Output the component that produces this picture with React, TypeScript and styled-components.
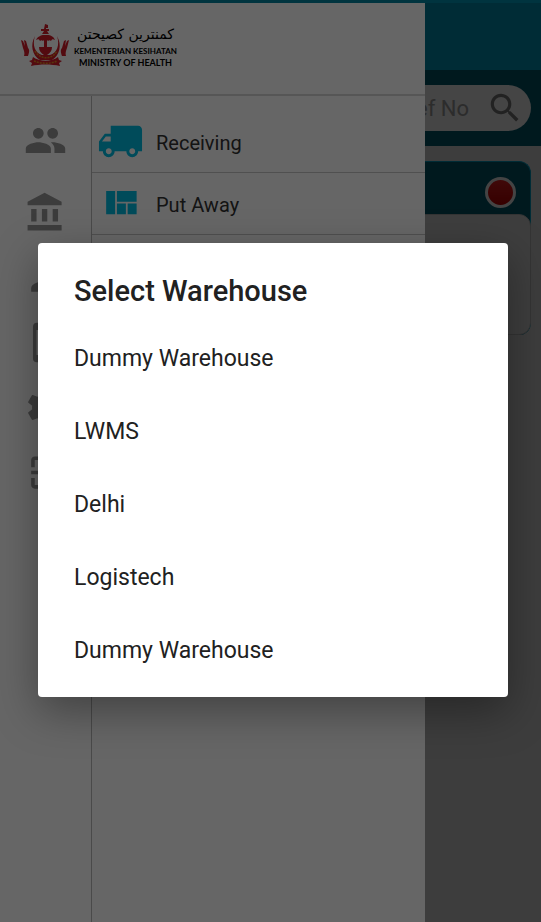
import React from "react";
import styled, { createGlobalStyle } from "styled-components";

const GlobalStyle = createGlobalStyle`
  *, *::before, *::after { box-sizing: border-box; }
  body { margin: 0; font-family: Roboto, "Liberation Sans", sans-serif; background: #989898; }
  button, input { font: inherit; color: inherit; }
  ul { list-style: none; margin: 0; padding: 0; }
`;

const Screen = styled.div`
  position: relative;
  min-height: 100vh;
  overflow: hidden;
`;

const TopBar = styled.header`
  height: 70px;
  background: #006e87;
  border-top: 3px solid #00829f;
`;

const SearchBar = styled.div`
  padding: 15px 10px;
  background: #003f4d;
`;

const SearchField = styled.form`
  display: flex;
  align-items: center;
  justify-content: flex-end;
  height: 46px;
  padding: 0 7px 0 20px;
  border-radius: 23px;
  background: #acacac;
`;

const SearchInput = styled.input`
  flex: 1;
  min-width: 0;
  padding: 0 17px 0 0;
  border: 0;
  background: transparent;
  font-size: 22px;
  text-align: right;
  &::placeholder { color: #6e6e6e; opacity: 1; }
`;

const IconButton = styled.button`
  display: flex;
  padding: 0;
  border: 0;
  background: transparent;
  color: #555;
`;

const Card = styled.article`
  margin: 15px 10px;
  border-radius: 12px;
  border: 1px solid #006e87;
  border-bottom: 0;
  background: #003f4d;
`;

const CardHead = styled.div`
  display: flex;
  align-items: center;
  justify-content: flex-end;
  height: 52px;
  padding: 8px 14px 0;
`;

const StatusDot = styled.span`
  width: 31px;
  height: 31px;
  border: 3px solid #aaa;
  border-radius: 50%;
  background: linear-gradient(#a01818, #860000);
`;

const CardBody = styled.div`
  height: 121px;
  margin: 0 -1px;
  border: 1px solid #828282;
  border-radius: 12px;
  background: #9c9c9c;
`;

const Drawer = styled.aside`
  position: absolute;
  inset: 3px auto 0 0;
  width: 78.5%;
  display: flex;
  flex-direction: column;
  background: #fff;
`;

const Brand = styled.div`
  display: flex;
  align-items: flex-start;
  height: 93px;
  padding: 21px 21px 0;
  border-bottom: 2px solid #d6d6d6;
`;

const BrandText = styled.div`
  display: flex;
  flex-direction: column;
  align-items: center;
  margin-left: 5px;
  color: #000;
  font-family: Lato, sans-serif;
  font-weight: 700;
  line-height: 12px;
  white-space: nowrap;
`;

const BrandScript = styled.span`
  font: 400 14px/21px "DejaVu Sans", sans-serif;
`;

const BrandLine = styled.span<{ $size: number }>`
  font-size: ${(p) => p.$size}px;
`;

const DrawerBody = styled.div`
  flex: 1;
  display: flex;
`;

const Rail = styled.nav`
  display: flex;
  flex-direction: column;
  align-items: center;
  width: 92px;
  padding-top: 12px;
  border-right: 1px solid #b8b8b8;
`;

const RailButton = styled.button<{ $tall?: boolean }>`
  display: flex;
  align-items: center;
  justify-content: center;
  width: 100%;
  height: ${(p) => (p.$tall ? 72 : 65)}px;
  padding: ${(p) => (p.$tall ? "0 0 8px" : "0")};
  border: 0;
  background: transparent;
  color: #979797;
`;

const Menu = styled.ul`
  flex: 1;
`;

const MenuItem = styled.li<{ $first?: boolean }>`
  padding-top: ${(p) => (p.$first ? 15 : 0)}px;
  border-bottom: 1px solid #c8c8c8;
`;

const MenuButton = styled.button`
  display: flex;
  align-items: center;
  gap: 12px;
  width: 100%;
  height: 61px;
  padding: 0 4px;
  border: 0;
  background: transparent;
  color: #333;
  font-size: 21px;
  text-align: left;
`;

const MenuLabel = styled.span`
  padding-top: 3px;
  font-size: 20px;
`;

const MenuIcon = styled.span`
  display: flex;
  justify-content: center;
  width: 48px;
  color: #00bbe2;
`;

const Backdrop = styled.div`
  position: absolute;
  inset: 0;
  display: flex;
  align-items: center;
  padding: 18px 33px 0 38px;
  background: rgba(0, 0, 0, 0.6);
`;

const Dialog = styled.section`
  flex: 1;
  padding: 24px 0 10px;
  border-radius: 4px;
  background: #fff;
  color: #212121;
  box-shadow: 0 14px 44px rgba(0, 0, 0, 0.36);
`;

const DialogTitle = styled.h2`
  margin: 0;
  padding: 0 36px 7px;
  font-size: 29px;
  font-weight: 500;
  line-height: 48px;
`;

const Option = styled.button`
  display: block;
  width: 100%;
  height: 73px;
  padding: 0 36px;
  border: 0;
  background: transparent;
  font-size: 23px;
  text-align: left;
`;

const Glyph = ({ d, size = 43, flip = false }: { d: string; size?: number; flip?: boolean }) => (
  <svg width={size} height={size} viewBox="0 0 24 24" fill="currentColor" aria-hidden="true">
    <path d={d} transform={flip ? "matrix(-1 0 0 1 24 0)" : undefined} />
  </svg>
);

const paths = {
  people: "M16 11c1.66 0 2.99-1.34 2.99-3S17.66 5 16 5s-3 1.34-3 3 1.34 3 3 3zm-8 0c1.66 0 2.99-1.34 2.99-3S9.66 5 8 5 5 6.34 5 8s1.34 3 3 3zm0 2c-2.33 0-7 1.17-7 3.5V19h14v-2.5c0-2.33-4.67-3.5-7-3.5zm8 0c-.29 0-.62.02-.97.05 1.16.84 1.97 1.97 1.97 3.45V19h6v-2.5c0-2.33-4.67-3.5-7-3.5z",
  bank: "M4 10v7h3v-7H4zm6 0v7h3v-7h-3zM2 22h19v-3H2v3zm14-12v7h3v-7h-3zm-4.5-9L2 6v2h19V6l-9.5-5z",
  person: "M12 12c2.21 0 4-1.79 4-4s-1.79-4-4-4-4 1.79-4 4 1.79 4 4 4zm0 2c-2.67 0-8 1.34-8 4v2h16v-2c0-2.66-5.33-4-8-4z",
  phone: "M17 1.01L7 1c-1.1 0-1.99.9-1.99 2v18c0 1.1.89 2 1.99 2h10c1.1 0 2-.9 2-2V3c0-1.1-.9-1.99-2-1.99zM17 19H7V5h10v14z",
  settings: "M19.43 12.98c.04-.32.07-.64.07-.98s-.03-.66-.07-.98l2.11-1.65c.19-.15.24-.42.12-.64l-2-3.46c-.12-.22-.39-.3-.61-.22l-2.49 1c-.52-.4-1.08-.73-1.69-.98l-.38-2.65C14.46 2.18 14.25 2 14 2h-4c-.25 0-.46.18-.49.42l-.38 2.65c-.61.25-1.17.59-1.69.98l-2.49-1c-.23-.09-.49 0-.61.22l-2 3.46c-.13.22-.07.49.12.64l2.11 1.65c-.04.32-.07.65-.07.98s.03.66.07.98l-2.11 1.65c-.19.15-.24.42-.12.64l2 3.46c.12.22.39.3.61.22l2.49-1c.52.4 1.08.73 1.69.98l.38 2.65c.03.24.24.42.49.42h4c.25 0 .46-.18.49-.42l.38-2.65c.61-.25 1.17-.59 1.69-.98l2.49 1c.23.09.49 0 .61-.22l2-3.46c.12-.22.07-.49-.12-.64l-2.11-1.65zM12 15.5c-1.93 0-3.5-1.57-3.5-3.5s1.57-3.5 3.5-3.5 3.5 1.57 3.5 3.5-1.57 3.5-3.5 3.5z",
  scan: "M4 9V5c0-1.1.9-2 2-2h4v2H6v4zM14 3h4c1.1 0 2 .9 2 2v4h-2V5h-4zM4 11h16v2H4zM4 15h2v4h4v2H6c-1.1 0-2-.9-2-2zM18 15h2v4c0 1.1-.9 2-2 2h-4v-2h4z",
  truck: "M20 8h-3V4H3c-1.1 0-2 .9-2 2v11h2c0 1.66 1.34 3 3 3s3-1.34 3-3h6c0 1.66 1.34 3 3 3s3-1.34 3-3h2v-5l-3-4zM6 18.5c-.83 0-1.5-.67-1.5-1.5s.67-1.5 1.5-1.5 1.5.67 1.5 1.5-.67 1.5-1.5 1.5zm13.5-9l1.96 2.5H17V9.5h2.5zm-1.5 9c-.83 0-1.5-.67-1.5-1.5s.67-1.5 1.5-1.5 1.5.67 1.5 1.5-.67 1.5-1.5 1.5z",
  quilt: "M10 18h5v-6h-5v6zm-6 0h5V5H4v13zm12 0h5v-6h-5v6zM10 5v6h11V5H10z",
  search: "M15.5 14h-.79l-.28-.27C15.41 12.59 16 11.11 16 9.5 16 5.91 13.09 3 9.5 3S3 5.91 3 9.5 5.91 16 9.5 16c1.61 0 3.09-.59 4.23-1.57l.27.28v.79l5 4.99L20.49 19l-4.99-5zm-6 0C7.01 14 5 11.99 5 9.5S7.01 5 9.5 5 14 7.01 14 9.5 11.99 14 9.5 14z",
};

const Emblem = () => (
  <svg width="48" height="44" viewBox="0 0 48 44" role="img" aria-label="Crest">
    <g fill="#d01c2a">
      <path d="M24 0l3 1v3h-2v1h3v2h-2l2 3h-7l2-3h-3V5h3z" />
      <path d="M15 16c1-3 5-5 8-5h3c4 0 7 2 8 5-2-1-3-1-4 1-1-1-2-1-3 0l-1-1v17h-3V16l-1 1c-1-1-2-1-3 0-1-2-2-2-4-1z" />
      <path d="M14 12c-5 9-3 19 5 24h12c8-5 10-15 5-24 3 9 0 17-7 19h-8c-7-2-10-10-7-19z" />
      <path d="M18 23h5v5h3v-5h5c0 4-2 6-5 8h-3c-3-2-5-4-5-8z" />
      <path d="M0 16l2 1 2 5-1-6 2 1 2 7c2 2 1 5 0 8H3c1-3 0-5-1-8z" />
      <path d="M48 16l-2 1-2 5 1-6-2 1-2 7c-2 2-1 5 0 8h4c-1-3 0-5 1-8z" />
      <path d="M12 33c7 5 18 5 25 0l1 3 3 1-3 2 1 3c-9-2-20-2-29 0l1-3-3-2 3-1z" />
    </g>
    <path d="M14 27c5 9 17 9 22 0M13 37c7 3 17 3 23 0" fill="none" stroke="#d98a1e" strokeWidth="1.5" strokeDasharray="2 1" />
  </svg>
);

const rail = [
  { label: "Users", d: paths.people },
  { label: "Warehouse", d: paths.bank },
  { label: "Profile", d: paths.person },
  { label: "Device", d: paths.phone },
  { label: "Settings", d: paths.settings },
  { label: "Scan", d: paths.scan },
];

const warehouses = ["Dummy Warehouse", "LWMS", "Delhi", "Logistech", "Dummy Warehouse"];

export default function App() {
  return (
    <Screen>
      <GlobalStyle />
      <TopBar />
      <main>
        <SearchBar>
          <SearchField>
            <SearchInput type="text" placeholder="Ref No" aria-label="Ref No" />
            <IconButton type="button" aria-label="Search">
              <Glyph d={paths.search} size={38} />
            </IconButton>
          </SearchField>
        </SearchBar>
        <Card>
          <CardHead>
            <StatusDot />
          </CardHead>
          <CardBody />
        </Card>
      </main>
      <Drawer>
        <Brand>
          <Emblem />
          <BrandText>
            <BrandScript lang="ms-Arab" dir="rtl">كمنترين كصيحتن</BrandScript>
            <BrandLine $size={8}>KEMENTERIAN KESIHATAN</BrandLine>
            <BrandLine $size={9}>MINISTRY OF HEALTH</BrandLine>
          </BrandText>
        </Brand>
        <DrawerBody>
          <Rail>
            {rail.map((item, i) => (
              <RailButton key={item.label} type="button" aria-label={item.label} $tall={i === 0}>
                <Glyph d={item.d} />
              </RailButton>
            ))}
          </Rail>
          <Menu>
            <MenuItem $first>
              <MenuButton type="button">
                <MenuIcon><Glyph d={paths.truck} size={47} flip /></MenuIcon>
                <MenuLabel>Receiving</MenuLabel>
              </MenuButton>
            </MenuItem>
            <MenuItem>
              <MenuButton type="button">
                <MenuIcon><Glyph d={paths.quilt} /></MenuIcon>
                <MenuLabel>Put Away</MenuLabel>
              </MenuButton>
            </MenuItem>
          </Menu>
        </DrawerBody>
      </Drawer>
      <Backdrop>
        <Dialog role="dialog" aria-modal="true" aria-labelledby="dialog-title">
          <DialogTitle id="dialog-title">Select Warehouse</DialogTitle>
          {warehouses.map((name, i) => (
            <Option key={i} type="button">{name}</Option>
          ))}
        </Dialog>
      </Backdrop>
    </Screen>
  );
}
